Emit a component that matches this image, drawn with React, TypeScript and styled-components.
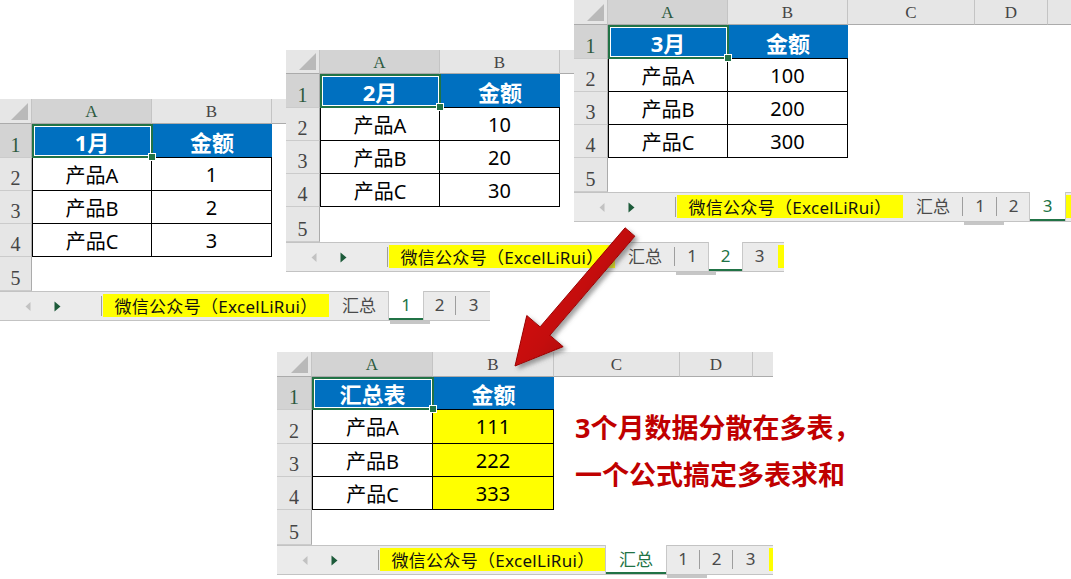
import React from 'react';
import styled, { createGlobalStyle } from 'styled-components';

const UI_FONT = `"Noto Sans", "Noto Sans CJK SC", sans-serif`;
const HEAD_FONT = `"Liberation Serif", "DejaVu Serif", serif`;

const GlobalStyle = createGlobalStyle`
  html, body { margin: 0; padding: 0; background: #ffffff; }
  body { font-family: ${UI_FONT}; }
`;

const Canvas = styled.div`
  position: relative;
  width: 1071px;
  height: 579px;
  overflow: hidden;
  background: #ffffff;
`;

const Window = styled.div<{ $x: number; $y: number; $w: number; $z: number }>`
  position: absolute;
  left: ${(p) => p.$x}px;
  top: ${(p) => p.$y}px;
  width: ${(p) => p.$w}px;
  z-index: ${(p) => p.$z};
  display: flex;
  flex-direction: column;
  background: #ffffff;
  overflow: hidden;
`;

const Grid = styled.div<{ $cols: string; $rows: string }>`
  display: grid;
  grid-template-columns: ${(p) => p.$cols};
  grid-template-rows: ${(p) => p.$rows};
  font-family: ${UI_FONT};
`;

const Corner = styled.div`
  position: relative;
  box-sizing: border-box;
  background: #e6e6e6;
  border-right: 1px solid #c4c4c4;
  border-bottom: 1px solid #ababab;
  &::after {
    content: '';
    position: absolute;
    right: 3px;
    bottom: 3px;
    width: 0;
    height: 0;
    border-left: 17px solid transparent;
    border-bottom: 17px solid #b9b9b9;
  }
`;

const ColHead = styled.div<{ $active?: boolean }>`
  display: flex;
  align-items: center;
  justify-content: center;
  box-sizing: border-box;
  padding-top: 2px;
  background: ${(p) => (p.$active ? '#d3d3d3' : '#e6e6e6')};
  color: ${(p) => (p.$active ? '#2c5a3e' : '#454545')};
  border-right: 1px solid #c4c4c4;
  border-bottom: 1px solid #ababab;
  font-family: ${HEAD_FONT};
  font-size: 17px;
`;

const RowHead = styled.div<{ $active?: boolean }>`
  display: flex;
  align-items: flex-end;
  justify-content: center;
  box-sizing: border-box;
  padding-bottom: 2px;
  background: ${(p) => (p.$active ? '#d3d3d3' : '#e6e6e6')};
  color: ${(p) => (p.$active ? '#2c5a3e' : '#454545')};
  border-right: 1px solid #ababab;
  border-bottom: 1px solid #cbcbcb;
  font-family: ${HEAD_FONT};
  font-size: 20px;
  line-height: 1;
`;

const HeadCell = styled.div<{ $selected?: boolean }>`
  position: ${(p) => (p.$selected ? 'relative' : 'static')};
  z-index: ${(p) => (p.$selected ? 2 : 'auto')};
  display: flex;
  align-items: center;
  justify-content: center;
  box-sizing: border-box;
  background: #0070c0;
  color: #ffffff;
  border-bottom: 1px solid #000000;
  font-size: 22px;
  font-weight: 700;
  font-family: ${UI_FONT};
`;

const BodyCell = styled.div<{ $fill?: string; $first?: boolean }>`
  display: flex;
  align-items: center;
  justify-content: center;
  box-sizing: border-box;
  background: ${(p) => p.$fill || '#ffffff'};
  color: #000000;
  border-right: 1px solid #000000;
  border-bottom: 1px solid #000000;
  border-left: ${(p) => (p.$first ? '1px solid #000000' : 'none')};
  font-size: 20px;
`;

const BlankCell = styled.div`
  background: #ffffff;
`;

const Selection = styled.div`
  position: absolute;
  left: 0;
  top: 0;
  right: -1px;
  bottom: -1px;
  box-sizing: border-box;
  border: 2px solid #217346;
  box-shadow: inset 0 0 0 1px #ffffff;
  pointer-events: none;
  &::after {
    content: '';
    position: absolute;
    right: -5px;
    bottom: -5px;
    width: 6px;
    height: 6px;
    background: #217346;
    border: 1px solid #ffffff;
  }
`;

const TabBar = styled.div`
  display: flex;
  align-items: stretch;
  height: 30px;
  box-sizing: border-box;
  background: #ebebeb;
  border-top: 1px solid #c3c3c3;
  border-bottom: 1px solid #c3c3c3;
  font-family: ${UI_FONT};
  font-size: 17px;
  white-space: nowrap;
`;

const NavArea = styled.div`
  display: flex;
  align-items: center;
  width: 101px;
  flex: none;
  padding-left: 24px;
  gap: 21px;
  box-sizing: border-box;
`;

const Divider = styled.div`
  flex: none;
  width: 1px;
  height: 20px;
  align-self: center;
  background: #9e9e9e;
`;

const YellowTab = styled.div<{ $w: number }>`
  flex: none;
  width: ${(p) => p.$w}px;
  margin: 2px 0 3px 1px;
  display: flex;
  align-items: center;
  justify-content: center;
  background: #ffff00;
  color: #111111;
  letter-spacing: 0.3px;
`;

const SheetTab = styled.div<{ $w: number; $active?: boolean; $sep?: boolean }>`
  position: relative;
  flex: none;
  width: ${(p) => p.$w}px;
  display: flex;
  align-items: center;
  justify-content: center;
  box-sizing: border-box;
  margin-top: -1px;
  background: ${(p) => (p.$active ? '#ffffff' : 'transparent')};
  color: ${(p) => (p.$active ? '#217346' : '#4a4a4a')};
  border-bottom: 2px solid ${(p) => (p.$active ? '#217346' : 'transparent')};
  box-shadow: ${(p) => (p.$active ? '1px 0 0 #c8c8c8, -1px 0 0 #c8c8c8' : 'none')};
  &::after {
    content: '';
    display: ${(p) => (p.$sep ? 'block' : 'none')};
    position: absolute;
    right: 0;
    top: 5px;
    width: 1px;
    height: 19px;
    background: #9e9e9e;
  }
`;

const Footer = styled.div`
  height: 4px;
  display: flex;
`;

const Thumb = styled.div`
  margin-left: 390px;
  width: 40px;
  height: 3px;
  background: #c6c6c6;
`;

const Callout = styled.div`
  position: absolute;
  left: 575px;
  top: 404px;
  z-index: 6;
  color: #c00000;
  font-family: ${UI_FONT};
  font-weight: 700;
  font-size: 27px;
  line-height: 47px;
  white-space: nowrap;
`;

const ArrowLayer = styled.svg`
  position: absolute;
  left: 500px;
  top: 215px;
  z-index: 8;
  overflow: visible;
`;

const NavArrow: React.FC<{ dir: 'l' | 'r'; color: string }> = ({ dir, color }) => (
  <svg width="8" height="11" viewBox="0 0 8 11">
    <polygon points={dir === 'l' ? '6.5,1 6.5,10 1.5,5.5' : '1.5,0.5 1.5,10.5 7.5,5.5'} fill={color} />
  </svg>
);

const LETTERS = ['A', 'B', 'C', 'D', 'E'];
const PRODUCTS = ['产品A', '产品B', '产品C'];
const TABS: { label: string; w: number }[] = [
  { label: '汇总', w: 60 },
  { label: '1', w: 34 },
  { label: '2', w: 33 },
  { label: '3', w: 35 },
];

type SheetProps = {
  x: number;
  y: number;
  w: number;
  z: number;
  rowHead: number;
  colWidths: number[];
  labelCount: number;
  headH: number;
  rowHeights: number[];
  title: string;
  values: string[];
  yellow?: boolean;
  activeTab: string;
};

const Sheet: React.FC<SheetProps> = ({
  x, y, w, z, rowHead, colWidths, labelCount, headH, rowHeights, title, values, yellow, activeTab,
}) => {
  const cols = `${rowHead}px ${colWidths.map((c) => `${c}px`).join(' ')}`;
  const rows = `${headH}px ${rowHeights.map((r) => `${r}px`).join(' ')}`;

  const renderCell = (r: number, c: number) => {
    const key = `${r}-${c}`;
    if (r === 0 && c < 2) {
      return (
        <HeadCell key={key} $selected={c === 0}>
          {c === 0 ? title : '金额'}
          {c === 0 && <Selection />}
        </HeadCell>
      );
    }
    if (r >= 1 && r <= 3 && c < 2) {
      return (
        <BodyCell key={key} $first={c === 0} $fill={c === 1 && yellow ? '#ffff00' : undefined}>
          {c === 0 ? PRODUCTS[r - 1] : values[r - 1]}
        </BodyCell>
      );
    }
    return <BlankCell key={key} />;
  };

  return (
    <Window $x={x} $y={y} $w={w} $z={z}>
      <Grid $cols={cols} $rows={rows}>
        <Corner />
        {colWidths.map((_, i) => (
          <ColHead key={`h${i}`} $active={i === 0}>{i < labelCount ? LETTERS[i] : ''}</ColHead>
        ))}
        {rowHeights.map((_, r) => (
          <React.Fragment key={`r${r}`}>
            <RowHead $active={r === 0}>{r + 1}</RowHead>
            {colWidths.map((__, c) => renderCell(r, c))}
          </React.Fragment>
        ))}
      </Grid>
      <TabBar>
        <NavArea>
          <NavArrow dir="l" color="#c2c2c2" />
          <NavArrow dir="r" color="#1d5b3a" />
        </NavArea>
        <Divider />
        <YellowTab $w={226}>微信公众号（ExcelLiRui）</YellowTab>
        {TABS.map((t, i) => {
          const active = t.label === activeTab;
          const nextActive = TABS[i + 1]?.label === activeTab;
          return (
            <SheetTab key={t.label} $w={t.w} $active={active} $sep={!active && !nextActive && i < TABS.length - 1}>
              {t.label}
            </SheetTab>
          );
        })}
        <YellowTab $w={20}></YellowTab>
      </TabBar>
      <Footer>
        <Thumb />
      </Footer>
    </Window>
  );
};

const O = { x: 500, y: 215 };
const pts = (list: [number, number][]) => list.map(([a, b]) => `${a - O.x},${b - O.y}`).join(' ');

const arrowPoints = pts([
  [625.1, 227.8],
  [540.1, 326.9],
  [526.8, 315.5],
  [515, 366],
  [563.2, 346.7],
  [549.9, 335.3],
  [634.9, 236.2],
]);

const App: React.FC = () => (
  <>
    <GlobalStyle />
    <Canvas>
      <Sheet
        x={0} y={99} w={490} z={1}
        rowHead={32} colWidths={[120, 120, 127, 73, 80]} labelCount={2}
        headH={25} rowHeights={[34, 33, 33, 33, 34]}
        title="1月" values={['1', '2', '3']} activeTab="1"
      />
      <Sheet
        x={286} y={50} w={498} z={2}
        rowHead={34} colWidths={[120, 120, 127, 73, 80]} labelCount={2}
        headH={24} rowHeights={[34, 33, 33, 33, 35]}
        title="2月" values={['10', '20', '30']} activeTab="2"
      />
      <Sheet
        x={574} y={0} w={497} z={3}
        rowHead={34} colWidths={[120, 120, 127, 73, 80]} labelCount={4}
        headH={25} rowHeights={[34, 33, 33, 33, 34]}
        title="3月" values={['100', '200', '300']} activeTab="3"
      />
      <Sheet
        x={277} y={352} w={496} z={1}
        rowHead={35} colWidths={[121, 121, 126, 73, 80]} labelCount={4}
        headH={25} rowHeights={[33, 34, 33, 33, 35]}
        title="汇总表" values={['111', '222', '333']} yellow activeTab="汇总"
      />
      <ArrowLayer width="150" height="160" viewBox="0 0 150 160">
        <defs>
          <linearGradient id="arrowFill" x1="0" y1="0" x2="1" y2="0.85">
            <stop offset="0" stopColor="#e4231b" />
            <stop offset="0.55" stopColor="#c40a0a" />
            <stop offset="1" stopColor="#8e0000" />
          </linearGradient>
          <filter id="arrowShadow" x="-20%" y="-20%" width="140%" height="140%">
            <feDropShadow dx="3" dy="3" stdDeviation="2" floodColor="#555" floodOpacity="0.55" />
          </filter>
        </defs>
        <polygon points={arrowPoints} fill="url(#arrowFill)" stroke="#9a0000" strokeWidth="1" filter="url(#arrowShadow)" />
      </ArrowLayer>
      <Callout>
        3个月数据分散在多表，
        <br />
        一个公式搞定多表求和
      </Callout>
    </Canvas>
  </>
);

export default App;
